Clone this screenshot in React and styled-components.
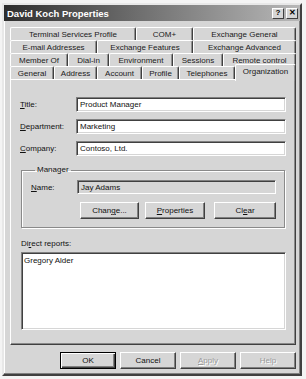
import React from 'react';
import styled, { createGlobalStyle } from 'styled-components';

const GlobalStyle = createGlobalStyle`
    html, body {
        margin: 0;
        padding: 0;
        background: #f4f4f4;
    }
    body {
        font-family: "Liberation Sans", Arial, sans-serif;
        font-size: 8px;
        color: #111;
    }
`;

const tabRows = [
    [
        { label: 'Terminal Services Profile', w: 126 },
        { label: 'COM+', w: 57 },
        { label: 'Exchange General', w: 103 },
    ],
    [
        { label: 'E-mail Addresses', w: 87 },
        { label: 'Exchange Features', w: 96 },
        { label: 'Exchange Advanced', w: 103 },
    ],
    [
        { label: 'Member Of', w: 58 },
        { label: 'Dial-in', w: 41 },
        { label: 'Environment', w: 64 },
        { label: 'Sessions', w: 50 },
        { label: 'Remote control', w: 73 },
    ],
    [
        { label: 'General', w: 44 },
        { label: 'Address', w: 43 },
        { label: 'Account', w: 45 },
        { label: 'Profile', w: 37 },
        { label: 'Telephones', w: 56 },
        { label: 'Organization', w: 61, active: true },
    ],
];

const Hot = ({ children }) => <u>{children}</u>;

export default function App() {
    return (
        <>
            <GlobalStyle />
            <Dialog>
                <TitleBar>
                    <Caption>David Koch Properties</Caption>
                    <CaptionButtons>
                        <CapButton>?</CapButton>
                        <CapButton>✕</CapButton>
                    </CaptionButtons>
                </TitleBar>
                <Body>
                    <Tabs>
                        {tabRows.map((row, i) => (
                            <TabRow key={i}>
                                {row.map(tab => (
                                    <Tab key={tab.label} w={tab.w} active={tab.active}>
                                        {tab.label}
                                    </Tab>
                                ))}
                            </TabRow>
                        ))}
                    </Tabs>
                    <Panel>
                        <Field>
                            <Label w={56}><Hot>T</Hot>itle:</Label>
                            <TextBox>Product Manager</TextBox>
                        </Field>
                        <Field>
                            <Label w={56}><Hot>D</Hot>epartment:</Label>
                            <TextBox>Marketing</TextBox>
                        </Field>
                        <Field>
                            <Label w={56}><Hot>C</Hot>ompany:</Label>
                            <TextBox>Contoso, Ltd.</TextBox>
                        </Field>
                        <Group>
                            <Legend>Manager</Legend>
                            <GroupField>
                                <Label w={46}><Hot>N</Hot>ame:</Label>
                                <TextBox disabled>Jay Adams</TextBox>
                            </GroupField>
                            <GroupButtons>
                                <Button w={59}>Chan<Hot>g</Hot>e...</Button>
                                <Button w={60}><Hot>P</Hot>roperties</Button>
                                <Button w={62} push>Cl<Hot>e</Hot>ar</Button>
                            </GroupButtons>
                        </Group>
                        <ListLabel>Di<Hot>r</Hot>ect reports:</ListLabel>
                        <ListBox>
                            <ListItem>Gregory Alder</ListItem>
                        </ListBox>
                    </Panel>
                    <Footer>
                        <Button w={56} primary>OK</Button>
                        <Button w={56}>Cancel</Button>
                        <Button w={56} disabled><Hot>A</Hot>pply</Button>
                        <Button w={56} disabled>Help</Button>
                    </Footer>
                </Body>
            </Dialog>
        </>
    );
}

const Dialog = styled.div`
    margin: 3px 0 0 2px;
    width: 296px;
    height: 369px;
    background: #d6d6d6;
    border: 2px solid;
    border-color: #e8e8e8 #404040 #404040 #e8e8e8;
    box-shadow: inset -1px -1px 0 #808080, inset 1px 1px 0 #fff;
    display: flex;
    flex-direction: column;
`;

const TitleBar = styled.div`
    height: 16px;
    background: linear-gradient(to right, #2e2e2e 0%, #6e6e6e 45%, #b8b8b8 100%);
    display: flex;
    align-items: center;
    justify-content: space-between;
    padding: 0 2px 0 3px;
`;

const Caption = styled.div`
    color: #fff;
    font-weight: bold;
    font-size: 9.5px;
`;

const CaptionButtons = styled.div`
    display: flex;
    gap: 2px;
`;

const CapButton = styled.div`
    width: 12px;
    height: 11px;
    box-sizing: border-box;
    background: #d6d6d6;
    border: 1px solid;
    border-color: #fff #404040 #404040 #fff;
    display: flex;
    align-items: center;
    justify-content: center;
    font-weight: bold;
    font-size: 8px;
    line-height: 1;
    color: #000;
`;

const Body = styled.div`
    flex: 1;
    display: flex;
    flex-direction: column;
    padding: 6px 4px 0 6px;
`;

const Tabs = styled.div`
    display: flex;
    flex-direction: column;
`;

const TabRow = styled.div`
    display: flex;
    height: 13px;
`;

const Tab = styled.div`
    position: relative;
    box-sizing: border-box;
    width: ${({ w }) => w}px;
    height: ${({ active }) => (active ? '17px' : '13px')};
    margin-top: ${({ active }) => (active ? '-2px' : '0')};
    z-index: ${({ active }) => (active ? 2 : 0)};
    background: #d6d6d6;
    border-top: 1px solid #fff;
    border-left: 1px solid #fff;
    border-right: 1px solid #404040;
    border-radius: 2px 2px 0 0;
    box-shadow: inset -1px 0 0 #909090;
    display: flex;
    align-items: ${({ active }) => (active ? 'flex-start' : 'center')};
    padding-top: ${({ active }) => (active ? '2px' : '0')};
    justify-content: center;
    white-space: nowrap;
    color: #1a1a1a;
`;

const Panel = styled.div`
    height: 266px;
    box-sizing: border-box;
    border: 1px solid;
    border-color: #fff #404040 #404040 #fff;
    box-shadow: inset -1px -1px 0 #8a8a8a;
    padding: 17px 9px 0 9px;
    display: flex;
    flex-direction: column;
`;

const Field = styled.div`
    display: flex;
    align-items: center;
    height: 15px;
    margin-bottom: 7px;
`;

const Label = styled.div`
    width: ${({ w }) => w}px;
    flex-shrink: 0;
    white-space: nowrap;
`;

const TextBox = styled.div`
    flex: 1;
    height: 100%;
    box-sizing: border-box;
    background: ${({ disabled }) => (disabled ? '#d6d6d6' : '#fff')};
    border: 1px solid;
    border-color: #808080 #fff #fff #808080;
    box-shadow: inset 1px 1px 0 #404040, inset -1px -1px 0 #d6d6d6;
    display: flex;
    align-items: center;
    padding-left: 3px;
    white-space: nowrap;
`;

const Group = styled.fieldset`
    margin: 2px 1px 0 1px;
    padding: 0 8px 8px 9px;
    border: 1px solid #8a8a8a;
    box-shadow: 1px 1px 0 #fff, inset 1px 1px 0 #fff;
    display: flex;
    flex-direction: column;
`;

const Legend = styled.legend`
    margin-left: 4px;
    padding: 0 2px;
    line-height: 10px;
`;

const GroupField = styled.div`
    display: flex;
    align-items: center;
    height: 14px;
    margin-top: 5px;
`;

const GroupButtons = styled.div`
    display: flex;
    gap: 6px;
    margin: 8px 0 0 49px;
`;

const Button = styled.div`
    width: ${({ w }) => w}px;
    height: 17px;
    margin-left: ${({ push }) => (push ? 'auto' : '0')};
    box-sizing: border-box;
    background: #d6d6d6;
    border: 1px solid;
    border-color: ${({ primary }) =>
        primary ? '#000' : '#fff #404040 #404040 #fff'};
    box-shadow: ${({ primary }) =>
        primary
            ? 'inset 1px 1px 0 #fff, inset -1px -1px 0 #404040, inset -2px -2px 0 #808080'
            : 'inset -1px -1px 0 #808080'};
    display: flex;
    align-items: center;
    justify-content: center;
    white-space: nowrap;
    color: ${({ disabled }) => (disabled ? '#9a9a9a' : '#111')};
    text-shadow: ${({ disabled }) => (disabled ? '1px 1px 0 #fff' : 'none')};
`;

const ListLabel = styled.div`
    margin: 11px 0 3px 1px;
    line-height: 10px;
`;

const ListBox = styled.div`
    margin: 0 0 0 1px;
    height: 78px;
    box-sizing: border-box;
    background: #fff;
    border: 1px solid;
    border-color: #808080 #fff #fff #808080;
    box-shadow: inset 1px 1px 0 #404040, inset -1px -1px 0 #d6d6d6;
    padding: 3px 2px;
`;

const ListItem = styled.div`
    line-height: 10px;
`;

const Footer = styled.div`
    display: flex;
    justify-content: flex-end;
    gap: 4px;
    margin-top: 7px;
`;
